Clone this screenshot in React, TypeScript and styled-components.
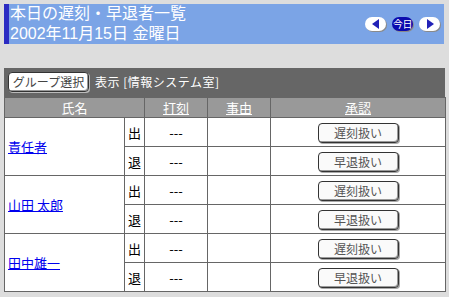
import React from "react";
import styled, { createGlobalStyle } from "styled-components";

const Global = createGlobalStyle`
  html, body { margin: 0; padding: 0; background: #dddddd; }
  body { font-family: "Noto Sans CJK JP", "Noto Sans", sans-serif; }
`;

const Page = styled.div`
  padding: 4px 4px 0 4px;
  display: flex;
  flex-direction: column;
  gap: 24px;
`;

const Header = styled.div`
  height: 40px;
  width: 440px;
  box-sizing: border-box;
  background: #7ba4e6;
  border-left: 5px solid #2b2bc2;
  display: flex;
  align-items: center;
  justify-content: space-between;
  padding: 0 4px 0 1px;
`;

const Title = styled.div`
  color: #ffffff;
  font-family: "Liberation Sans", "Noto Sans CJK JP", sans-serif;
  font-size: 16px;
  line-height: 20px;
  white-space: nowrap;
`;

const TitleLine = styled.div`
  height: 20px;
`;

const Nav = styled.div`
  display: flex;
  gap: 6px;
  align-items: center;
  margin-top: -1px;
`;

const Pill = styled.span<{ $dark?: boolean }>`
  width: 21px;
  height: 14px;
  border-radius: 7px;
  background: ${(p) => (p.$dark ? "#0c0cae" : "#ffffff")};
  box-shadow: 1px 1px 0 #8a8a8a;
  display: flex;
  align-items: center;
  justify-content: center;
  color: #ffffff;
  font-size: 10px;
  line-height: 14px;
  letter-spacing: -0.5px;
`;

const Panel = styled.div`
  width: 441px;
  background: #666666;
`;

const Toolbar = styled.div`
  height: 29px;
  box-sizing: border-box;
  padding: 4px 4px 0 4px;
  display: flex;
  align-items: flex-start;
  gap: 6px;
  color: #ffffff;
  font-size: 12px;
`;

const ToolLabel = styled.span`
  line-height: 20px;
  letter-spacing: 0.5px;
`;

const GroupButton = styled.button`
  height: 20px;
  width: 81px;
  padding: 0;
  background: #ffffff;
  border: 1px solid #333333;
  border-radius: 4px;
  box-shadow: inset -1px -1px 0 #9a9a9a, 1px 1px 0 #bbbbbb;
  font-family: "Noto Sans CJK JP", sans-serif;
  font-size: 12px;
  color: #444444;
  line-height: 18px;
`;

const Table = styled.table`
  width: 441px;
  border-collapse: collapse;
  table-layout: fixed;
  font-size: 13px;
`;

const HeadCell = styled.th`
  background: #999999;
  color: #ffffff;
  font-weight: normal;
  height: 19px;
  padding: 0;
  border: 1px solid #666666;
  text-align: center;
  line-height: 19px;
`;

const HeadLink = styled.span`
  text-decoration: underline;
`;

const Cell = styled.td<{ $align?: string }>`
  background: #ffffff;
  border: 1px solid #666666;
  height: 28px;
  padding: 0;
  text-align: ${(p) => p.$align || "center"};
  vertical-align: middle;
  color: #000000;
`;

const NameCell = styled(Cell)`
  padding-left: 3px;
  text-align: left;
`;

const NameLink = styled.a`
  color: #0000ee;
  text-decoration: underline;
`;

const ActionButton = styled.button`
  width: 81px;
  height: 20px;
  padding: 0;
  background: #fafafa;
  border: 1px solid #333333;
  border-radius: 4px;
  box-shadow: inset -1px -1px 0 #9a9a9a, 1px 1px 0 #aaaaaa;
  font-family: "Noto Sans CJK JP", sans-serif;
  font-size: 12px;
  color: #555555;
  line-height: 18px;
  vertical-align: middle;
`;

const Tri = ({ dir }: { dir: "l" | "r" }) => (
  <svg width="8" height="10" viewBox="0 0 8 10">
    {dir === "l" ? (
      <polygon points="7,0 7,10 0,5" fill="#2222b8" />
    ) : (
      <polygon points="1,0 1,10 8,5" fill="#2222b8" />
    )}
  </svg>
);

const people = ["責任者", "山田 太郎", "田中雄一"];

export default function App() {
  return (
    <>
      <Global />
      <Page>
        <Header>
          <Title>
            <TitleLine>本日の遅刻・早退者一覧</TitleLine>
            <TitleLine>2002年11月15日 金曜日</TitleLine>
          </Title>
          <Nav>
            <Pill>
              <Tri dir="l" />
            </Pill>
            <Pill $dark>今日</Pill>
            <Pill>
              <Tri dir="r" />
            </Pill>
          </Nav>
        </Header>
        <Panel>
          <Toolbar>
            <GroupButton>グループ選択</GroupButton>
            <ToolLabel>表示 [情報システム室]</ToolLabel>
          </Toolbar>
          <Table>
            <colgroup>
              <col style={{ width: 120 }} />
              <col style={{ width: 20 }} />
              <col style={{ width: 63 }} />
              <col style={{ width: 63 }} />
              <col style={{ width: 175 }} />
            </colgroup>
            <thead>
              <tr>
                <HeadCell colSpan={2}>氏名</HeadCell>
                <HeadCell>
                  <HeadLink>打刻</HeadLink>
                </HeadCell>
                <HeadCell>
                  <HeadLink>事由</HeadLink>
                </HeadCell>
                <HeadCell>
                  <HeadLink>承認</HeadLink>
                </HeadCell>
              </tr>
            </thead>
            <tbody>
              {people.map((name) => (
                <React.Fragment key={name}>
                  <tr>
                    <NameCell rowSpan={2}>
                      <NameLink>{name}</NameLink>
                    </NameCell>
                    <Cell>出</Cell>
                    <Cell>---</Cell>
                    <Cell></Cell>
                    <Cell>
                      <ActionButton>遅刻扱い</ActionButton>
                    </Cell>
                  </tr>
                  <tr>
                    <Cell>退</Cell>
                    <Cell>---</Cell>
                    <Cell></Cell>
                    <Cell>
                      <ActionButton>早退扱い</ActionButton>
                    </Cell>
                  </tr>
                </React.Fragment>
              ))}
            </tbody>
          </Table>
        </Panel>
      </Page>
    </>
  );
}
